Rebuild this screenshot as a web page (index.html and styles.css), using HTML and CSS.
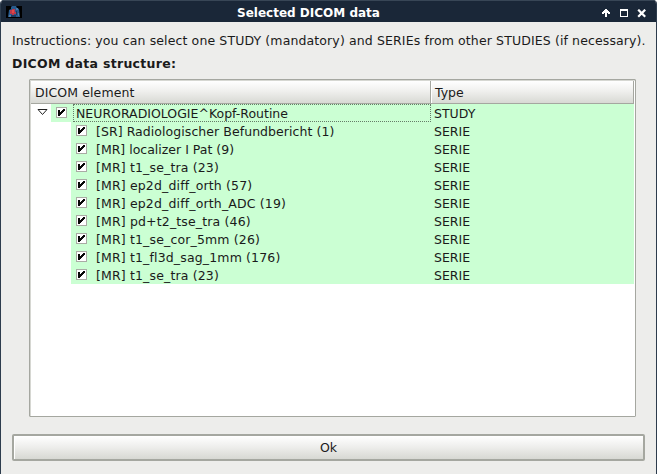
FILE: index.html
```html
<!DOCTYPE html>
<html lang="en">
<head>
<meta charset="utf-8">
<title>Selected DICOM data</title>
<link rel="stylesheet" href="styles.css">
</head>
<body>
<svg class="defs" width="0" height="0" aria-hidden="true">
  <symbol id="check" viewBox="0 0 11 11"><rect x=".5" y=".5" width="10" height="10" fill="#fff" stroke="#a9aba4"/><path d="M2 3h2v2h1V4h1V3h1V2h2v2H8v1H7v1H6v1H5v1H4v1H2z" fill="#080808"/></symbol>
</svg>
<div class="window">
  <header class="titlebar">
    <svg class="app-icon" width="16" height="12" viewBox="0 0 16 12"><path fill="#000" d="M0 0h16v12H0z"/><path fill="#285a8c" d="M5 1l1-1h4l1 2 2 1 1 8H2l1-7 2-1z"/><path fill="#4a7aaa" d="M10 2h2v2h-2zM3 9h2v2H3zM12 7h1v3h-1z"/><path fill="#1a3a62" d="M5 9h5v2H5zM10 5h1v4h-1z"/><path fill="#b9384a" d="M4 4h2V3h3v3h1v2H8v1H6V8H4z"/><path fill="#e34848" d="M6 4h2v3H6z"/></svg>
    <h1 class="title">Selected DICOM data</h1>
    <svg class="controls" width="46" height="9" viewBox="0 0 46 9"><path fill="#fff" d="M3 0h2v1h1v1h1v1h1v2H6V4H5v4H3V4H2v1H0V3h1V2h1V1h1z"/><path fill="#fff" fill-rule="evenodd" d="M18 0h8v8h-8zM19 2v5h6V2z"/><path d="M36.2 .7l7 7M43.2 .7l-7 7" stroke="#fff" stroke-width="2.2"/></svg>
  </header>
  <main class="content">
    <p class="instructions">Instructions: you can select one STUDY (mandatory) and SERIEs from other STUDIES (if necessary).</p>
    <h2 class="heading">DICOM data structure:</h2>
    <div class="tree">
      <div class="head"><div class="col-name">DICOM element</div><div class="col-type">Type</div></div>
      <div class="row study">
        <svg class="arrow" width="11" height="7" viewBox="0 0 11 7"><path d="M1 .5h9L5.5 5.5z" fill="#fff" stroke="#222"/></svg>
        <div class="cells"><svg class="check"><use href="#check"/></svg><span class="name focus">NEURORADIOLOGIE^Kopf-Routine</span><span class="type">STUDY</span></div>
      </div>
      <div class="row"><div class="cells"><svg class="check"><use href="#check"/></svg><span class="name long">[SR] Radiologischer Befundbericht (1)</span><span class="type">SERIE</span></div></div>
      <div class="row"><div class="cells"><svg class="check"><use href="#check"/></svg><span class="name plain">[MR] localizer I Pat (9)</span><span class="type">SERIE</span></div></div>
      <div class="row"><div class="cells"><svg class="check"><use href="#check"/></svg><span class="name">[MR] t1_se_tra (23)</span><span class="type">SERIE</span></div></div>
      <div class="row"><div class="cells"><svg class="check"><use href="#check"/></svg><span class="name">[MR] ep2d_diff_orth (57)</span><span class="type">SERIE</span></div></div>
      <div class="row"><div class="cells"><svg class="check"><use href="#check"/></svg><span class="name">[MR] ep2d_diff_orth_ADC (19)</span><span class="type">SERIE</span></div></div>
      <div class="row"><div class="cells"><svg class="check"><use href="#check"/></svg><span class="name">[MR] pd+t2_tse_tra (46)</span><span class="type">SERIE</span></div></div>
      <div class="row"><div class="cells"><svg class="check"><use href="#check"/></svg><span class="name">[MR] t1_se_cor_5mm (26)</span><span class="type">SERIE</span></div></div>
      <div class="row"><div class="cells"><svg class="check"><use href="#check"/></svg><span class="name">[MR] t1_fl3d_sag_1mm (176)</span><span class="type">SERIE</span></div></div>
      <div class="row"><div class="cells"><svg class="check"><use href="#check"/></svg><span class="name">[MR] t1_se_tra (23)</span><span class="type">SERIE</span></div></div>
    </div>
    <button class="ok">Ok</button>
  </main>
</div>
</body>
</html>
```
FILE: styles.css
```css
* { box-sizing: border-box; }
body { margin: 0; background: #fff; font: 12.5px/18px "DejaVu Sans", sans-serif; color: #1a1a1a; overflow: hidden; }
.defs { display: none; }
.window { width: 657px; height: 474px; background: #ededeb; border: solid #2d3c4d; border-width: 0 1px; border-radius: 4px 4px 0 0; overflow: hidden; }
.titlebar { height: 22px; background: #1a2738; border-top: 1px solid #384656; display: flex; align-items: center; padding: 0 8px 0 5px; }
.app-icon { margin-top: 1px; }
.title { flex: 1; margin: 3px 7px 0 0; text-align: center; font-size: 12px; line-height: 18px; color: #fff; }
.controls { margin-top: 4px; }
.content { padding: 10px 11px 0; display: flex; flex-direction: column; }
.instructions { margin: 0; height: 18px; white-space: nowrap; letter-spacing: .122px; }
.heading { margin: 5px 0 0; font-size: 12.5px; line-height: 18px; height: 18px; letter-spacing: .29px; }
.tree { margin: 6px 9px 0 17px; height: 338px; background: #fff; border: 1px solid #a5a7a0; border-radius: 1px; box-shadow: inset 1px 1px #d6d7d2; padding: 1px 1px 0; }
.head { height: 23px; display: flex; background: linear-gradient(#fff, #f0f0ee 45%, #d8d9d4); border-bottom: 1px solid #a5a7a0; border-right: 1px solid #a5a7a0; line-height: 24px; }
.col-name { width: 400px; padding-left: 4px; border-right: 1px solid #a5a7a0; letter-spacing: .1px; }
.col-type { padding-left: 3px; border-left: 1px solid #fff; }
.row { height: 18px; display: flex; padding-left: 40px; line-height: 20px; }
.row.study { padding-left: 6px; }
.arrow { margin: 5px 3px 0 0; }
.cells { flex: 1; display: flex; background: #cbffd3; padding-left: 5px; }
.check { width: 11px; height: 11px; margin: 3px 6px 0 0; }
.name { flex: 1; height: 18px; padding-left: 3px; white-space: nowrap; letter-spacing: .15px; }
.name.long { letter-spacing: .06px; }
.name.plain { letter-spacing: 0; }
.name.focus { letter-spacing: 0; outline: 1px dotted #657c68; outline-offset: -1px; }
.type { width: 203px; height: 18px; padding-left: 3px; }
.ok { margin: 17px 0 0; height: 27px; padding: 0; font: inherit; color: inherit; border: 2px solid #a5a7a0; border-radius: 2px; background: linear-gradient(#fff, #efefed 45%, #d7d8d3); box-shadow: inset 1px 1px #fff; }
```
